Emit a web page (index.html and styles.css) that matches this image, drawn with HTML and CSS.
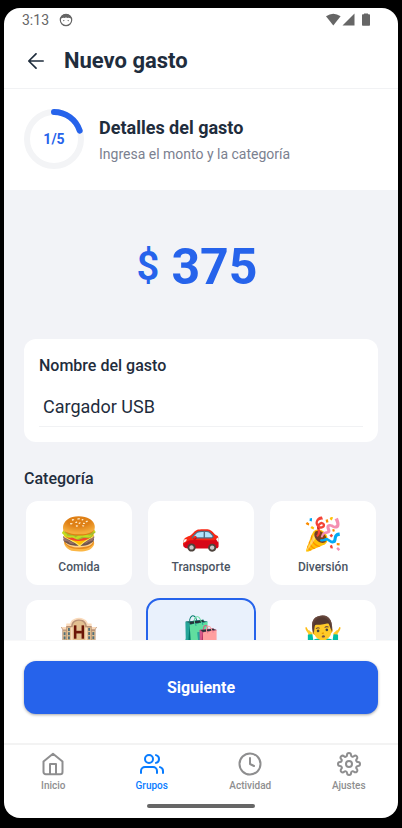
FILE: index.html
```html
<!DOCTYPE html>
<html lang="es">
<head>
<meta charset="utf-8">
<meta name="viewport" content="width=device-width, initial-scale=1">
<title>Nuevo gasto</title>
<link rel="stylesheet" href="styles.css">
</head>
<body>
<div class="phone">
  <div class="status">
    <span class="time">3:13</span>
    <svg class="face" width="14" height="14" viewBox="0 0 14 14"><circle cx="7" cy="7" r="5.7" fill="none" stroke="currentColor" stroke-width="1.2"/><path d="M1.5 5.6C2 2.700 4.200 1 7 1s5 1.700 5.500 4.600L9.600 4.800 8 5 7 4.300 6 5l-1.600-.2z" fill="currentColor"/><circle cx="4.800" cy="7.600" r=".7" fill="currentColor"/><circle cx="9.200" cy="7.600" r=".7" fill="currentColor"/></svg>
    <svg class="signals" width="46" height="14" viewBox="0 0 46 14" fill="currentColor"><path d="M0 3.300Q7.300-2 14.600 3.300L7.300 12.600z"/><path d="M28.500.6v12H16.500z"/><path d="M38 1.200V.4h4v.8h1.200q.8 0 .8.800v10q0 .8-.8.800h-6.400q-.8 0-.8-.8V2q0-.8.800-.8z"/></svg>
  </div>
  <header class="header">
    <button class="back" type="button" aria-label="Volver"><svg width="16" height="16" viewBox="0 0 16 16" fill="none" stroke="currentColor" stroke-width="1.700" stroke-linecap="round" stroke-linejoin="round"><path d="M15.200 8H1M8 .8.800 8 8 15.200"/></svg></button>
    <h1>Nuevo gasto</h1>
  </header>
  <section class="step">
    <div class="ring">
      <svg width="60" height="60" viewBox="0 0 60 60" fill="none" stroke-width="6"><circle cx="30" cy="30" r="27" stroke="#f3f4f6"/><path d="M30 3A27 27 0 0 1 55.700 21.700" stroke="#2663eb" stroke-linecap="round"/></svg>
      <span>1/5</span>
    </div>
    <div>
      <h2>Detalles del gasto</h2>
      <p>Ingresa el monto y la categoría</p>
    </div>
  </section>
  <main class="content">
    <div class="amount"><span class="currency">$</span><span class="value">375</span></div>
    <div class="card">
      <label for="name">Nombre del gasto</label>
      <input id="name" type="text" value="Cargador USB">
    </div>
    <h3>Categoría</h3>
    <div class="grid">
      <button type="button" class="cat"><span class="emoji">🍔</span>Comida</button>
      <button type="button" class="cat"><span class="emoji">🚗</span>Transporte</button>
      <button type="button" class="cat"><span class="emoji">🎉</span>Diversión</button>
      <button type="button" class="cat"><span class="emoji">🏨</span></button>
      <button type="button" class="cat selected"><span class="emoji">🛍️</span></button>
      <button type="button" class="cat"><span class="emoji">🤷‍♂️</span></button>
    </div>
  </main>
  <div class="action"><button type="button" class="next">Siguiente</button></div>
  <nav class="tabs">
    <a href="#inicio"><svg width="24" height="24" viewBox="0 0 24 24"><path d="M2.500 9.500 12 1.800l9.500 7.700V20a2.200 2.200 0 0 1-2.200 2.200H4.700A2.200 2.200 0 0 1 2.500 20z"/><path d="M9 22v-10h6v10"/></svg>Inicio</a>
    <a href="#grupos" class="active"><svg width="24" height="24" viewBox="0 0 24 24"><path d="M17 21v-2a4 4 0 0 0-4-4H5a4 4 0 0 0-4 4v2"/><circle cx="9" cy="7" r="4"/><path d="M23 21v-2a4 4 0 0 0-3-3.870M16 3.130a4 4 0 0 1 0 7.750"/></svg>Grupos</a>
    <a href="#actividad"><svg width="24" height="24" viewBox="0 0 24 24"><circle cx="12" cy="12" r="10.500"/><path d="M12 6v6l4 2"/></svg>Actividad</a>
    <a href="#ajustes"><svg width="24" height="24" viewBox="0 0 24 24"><circle cx="12" cy="12" r="3"/><path d="M19.400 15a1.650 1.650 0 0 0 .33 1.820l.06.06a2 2 0 1 1-2.830 2.830l-.06-.06a1.650 1.650 0 0 0-1.820-.33 1.650 1.650 0 0 0-1 1.510V21a2 2 0 0 1-4 0v-.09A1.650 1.650 0 0 0 9 19.400a1.650 1.650 0 0 0-1.820.33l-.06.06a2 2 0 1 1-2.830-2.830l.06-.06A1.650 1.650 0 0 0 4.680 15a1.650 1.650 0 0 0-1.510-1H3a2 2 0 0 1 0-4h.09A1.650 1.650 0 0 0 4.600 9a1.650 1.650 0 0 0-.33-1.820l-.06-.06a2 2 0 1 1 2.830-2.830l.06.06A1.650 1.650 0 0 0 9 4.680a1.650 1.650 0 0 0 1-1.510V3a2 2 0 0 1 4 0v.09a1.650 1.650 0 0 0 1 1.510 1.650 1.650 0 0 0 1.820-.33l.06-.06a2 2 0 1 1 2.830 2.830l-.06.06A1.650 1.650 0 0 0 19.400 9a1.650 1.650 0 0 0 1.510 1H21a2 2 0 0 1 0 4h-.09a1.650 1.650 0 0 0-1.510 1z"/></svg>Ajustes</a>
  </nav>
  <div class="handle"></div>
</div>
</body>
</html>
```
FILE: styles.css
```css
* { box-sizing: border-box; }
body {
  margin: 0;
  padding: 8px 4px 10px;
  height: 100vh;
  background: #000;
  color: #1f2d3d;
  font-family: Roboto, sans-serif;
}
h1, h2, h3, p { margin: 0; }
button, input { font-family: inherit; color: inherit; border: 0; padding: 0; background: none; }
.phone {
  height: 100%;
  display: flex;
  flex-direction: column;
  background: #fff;
  border-radius: 16px;
  overflow: hidden;
}
.phone > * { flex-shrink: 0; }
.status {
  display: flex;
  align-items: center;
  gap: 10px;
  height: 24px;
  padding: 0 26px 0 18px;
  color: #666;
}
.time { font-size: 14px; line-height: 24px; }
.signals { margin-left: auto; }
.header {
  display: flex;
  align-items: center;
  gap: 20px;
  padding: 14px 24px 12px;
  border-bottom: 1px solid #f1f2f4;
}
.back { display: flex; }
h1 { font-size: 22px; line-height: 30px; font-weight: 700; }
.step { display: flex; align-items: center; gap: 15px; padding: 20px 20px 21px; }
.ring { display: grid; place-items: center; }
.ring > * { grid-area: 1 / 1; }
.ring span { color: #2663eb; font-size: 14px; font-weight: 700; }
h2 { font-size: 18px; line-height: 24px; font-weight: 700; margin: 2px 0 4px; }
.step p { font-size: 14px; line-height: 20px; color: #7b8190; }
.content {
  flex: 1 1 0;
  min-height: 0;
  overflow: hidden;
  padding: 0 20px;
  background: #f2f3f7;
}
.amount {
  display: flex;
  justify-content: center;
  align-items: center;
  gap: 12px;
  height: 149px;
  padding: 4px 8px 0 0;
  color: #2663eb;
  font-weight: 700;
}
.currency { font-size: 40px; font-weight: 600; }
.value { font-size: 50px; }
.card { padding: 15px; background: #fff; border-radius: 12px; }
.card label { display: block; font-size: 16px; line-height: 24px; font-weight: 500; margin-bottom: 8px; }
.card input {
  display: block;
  width: 100%;
  height: 41px;
  padding: 0 4px;
  font-size: 18px;
  border-bottom: 1px solid #f1f2f4;
}
h3 { font-size: 16px; line-height: 24px; font-weight: 500; margin: 25px 0 8px; }
.grid { display: grid; grid-template-columns: repeat(3, 1fr); gap: 11px 12px; }
.cat {
  display: flex;
  flex-direction: column;
  align-items: center;
  height: 88px;
  padding: 12px 0 0;
  border: 2px solid transparent;
  border-radius: 14px;
  background: #fff;
  background-clip: padding-box;
  font-size: 12px;
  line-height: 16px;
  font-weight: 500;
  color: #4b5563;
}
.selected { border-color: #2663eb; background: #e9f1fc; }
.emoji { font-family: "Noto Color Emoji", sans-serif; font-size: 32px; line-height: 42px; margin-bottom: 4px; }
.action { padding: 20px 20px 29px; border-top: 1px solid #f8f8f9; }
.next {
  display: block;
  width: 100%;
  height: 53px;
  border-radius: 12px;
  background: #2663eb;
  color: #fff;
  font-size: 16px;
  font-weight: 700;
  box-shadow: 0 1px 3px rgba(0, 0, 0, .35);
}
.tabs {
  display: grid;
  grid-template-columns: repeat(4, 1fr);
  padding: 7px 0 10px;
  border-top: 2px solid #f3f3f3;
}
.tabs a {
  display: flex;
  flex-direction: column;
  align-items: center;
  gap: 2px;
  color: #8e8e8f;
  text-decoration: none;
  font-size: 10px;
  line-height: 16px;
  font-weight: 500;
}
.tabs .active { color: #087cff; }
.tabs svg { fill: none; stroke: currentColor; stroke-width: 2; stroke-linecap: round; stroke-linejoin: round; }
.handle { width: 108px; height: 4px; margin: 0 auto 10px; border-radius: 2px; background: #666; }
```
